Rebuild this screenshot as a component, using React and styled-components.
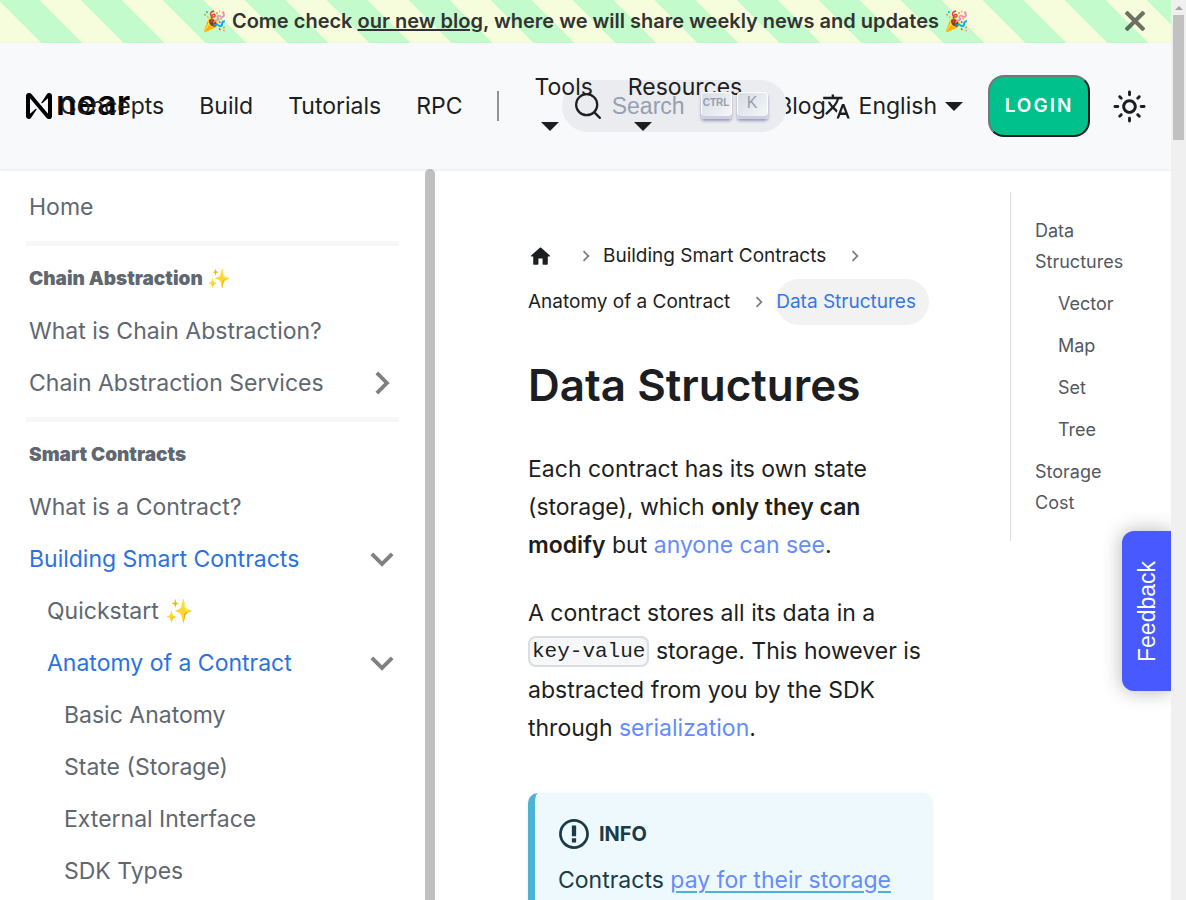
import React from "react";
import styled, { createGlobalStyle, css } from "styled-components";

const GlobalStyle = createGlobalStyle`
  *, *::before, *::after { box-sizing: border-box; }
  body {
    margin: 0;
    background: #fff;
    color: #1c1e21;
    font-family: Inter, "Liberation Sans", sans-serif;
    font-size: 23px;
    line-height: 38px;
    text-rendering: optimizeLegibility;
  }
  a { color: inherit; text-decoration: none; }
  ul, ol { list-style: none; margin: 0; padding: 0; }
  button { font: inherit; color: inherit; cursor: pointer; }
`;

const Shell = styled.div`
  display: grid;
  grid-template-columns: minmax(0, 1fr) 15px;
  height: 100vh;
  overflow: hidden;
`;

const Viewport = styled.div`
  position: relative;
  display: flex;
  flex-direction: column;
  min-width: 0;
  overflow: hidden;
`;

const PageScrollbar = styled.div`
  display: flex;
  flex-direction: column;
  align-items: center;
  gap: 5px;
  padding-top: 6px;
  background: #f0f0f0;
`;

const ScrollArrow = styled.span`
  border: 4px solid transparent;
  border-top: 0;
  border-bottom-color: #a3a3a3;
`;

const ScrollThumb = styled.span`
  width: 11px;
  height: 125px;
  background: #c1c1c1;
`;

const Announcement = styled.div`
  display: flex;
  align-items: center;
  height: 43px;
  flex: none;
  padding: 0 16px 2px;
  color: #333;
  font-size: 20px;
  font-weight: 600;
  line-height: 32px;
  background: repeating-linear-gradient(45deg, #f6fddc 0 29px, #c3fbcd 29px 58px);
`;

const AnnouncementText = styled.div`
  flex: 1;
  padding-left: 40px;
  text-align: center;
  a { text-decoration: underline; }
`;

const CloseButton = styled.button`
  display: flex;
  justify-content: center;
  width: 40px;
  padding: 0;
  border: 0;
  background: none;
  color: #000;
  opacity: 0.55;
`;

const Navbar = styled.nav`
  position: relative;
  z-index: 1;
  display: flex;
  align-items: center;
  height: 126px;
  flex: none;
  padding: 0 24px 0 26px;
  background: #f8f9fb;
  box-shadow: 0 1px 3px rgba(0, 0, 0, 0.1);
`;

const NavStart = styled.div`
  display: flex;
  align-items: center;
  flex: 1;
  min-width: 0;
`;

const NavEnd = styled.div`
  display: flex;
  align-items: center;
  flex: none;
`;

const Brand = styled.a`
  display: flex;
  align-items: center;
  gap: 4px;
  width: 0;
  margin-right: 16px;
  color: #000;
  svg { flex: none; }
`;

const BrandName = styled.span`
  padding-bottom: 6px;
  font-size: 34px;
  font-weight: 600;
`;

const NavLink = styled.a`
  flex: none;
  padding: 0 17px 0 18px;
`;

const Divider = styled.span`
  flex: none;
  width: 2px;
  height: 30px;
  margin: 0 18px 0 17px;
  background: #919296;
`;

const Caret = styled.span`
  flex: none;
  border: 9px solid transparent;
  border-top: 9px solid currentColor;
  border-bottom: 0;
`;

const Dropdown = styled.a`
  position: relative;
  display: flex;
  flex-direction: column;
  gap: 16px;
  flex: none;
  padding: 0 17px 14px 18px;
  ${Caret} { align-self: flex-start; margin-left: 6px; }
`;

const SearchButton = styled.button`
  display: flex;
  align-items: center;
  height: 52px;
  padding: 0 19px 0 12px;
  border: 0;
  border-radius: 26px;
  background: #ebecf0;
  font-family: "Liberation Sans", sans-serif;
  font-size: 23px;
`;

const SearchLabel = styled.span`
  padding: 0 16px 0 10px;
  color: #969faf;
`;

const Keys = styled.span`
  position: relative;
  display: flex;
  gap: 5px;
  padding-bottom: 2px;
`;

const Key = styled.kbd`
  display: flex;
  justify-content: center;
  width: 31px;
  height: 27px;
  padding-bottom: 4px;
  border-radius: 4px;
  background: linear-gradient(-225deg, #d5dbe4, #f8f8f8);
  box-shadow: inset 0 -3px 0 0 #cdcde6, inset 0 0 1px 1px #fff, 0 2px 3px 0 rgba(30, 35, 90, 0.4);
  color: #969faf;
  font-family: "Liberation Sans", sans-serif;
  font-size: ${(p) => (p.$small ? 10 : 16)}px;
  font-weight: ${(p) => (p.$small ? 700 : 400)};
  line-height: 22px;
`;

const Language = styled.a`
  display: flex;
  align-items: center;
  gap: 8px;
  padding: 0 25px 0 35px;
`;

const LoginButton = styled.button`
  width: 102px;
  height: 62px;
  padding: 0;
  border: 2px solid;
  border-color: #767676 #1c1e21 #1c1e21 #767676;
  border-radius: 16px;
  background: #00c08b;
  color: #fff;
  font-size: 19px;
  font-weight: 600;
  letter-spacing: 2px;
`;

const ThemeButton = styled.button`
  display: flex;
  margin-left: 22px;
  padding: 0;
  border: 0;
  background: none;
`;

const Body = styled.div`
  display: grid;
  grid-template-columns: 435px minmax(0, 1fr);
  flex: 1;
  min-height: 0;
`;

const Sidebar = styled.aside`
  display: grid;
  grid-template-columns: minmax(0, 1fr) 10px;
  min-height: 0;
  overflow: hidden;
`;

const SidebarThumb = styled.span`
  border-radius: 5px 5px 0 0;
  background: #c0c0c0;
`;

const Menu = styled.ul`
  padding: 12px 26px 0;
`;

const MenuDivider = styled.li`
  height: 5px;
  margin: 8px 0 7px;
  background: #f7f7f7;
`;

const indents = [3, 21, 38];

const MenuRow = styled.li`
  display: flex;
  align-items: center;
  justify-content: space-between;
  height: 52px;
  padding-left: ${(p) => indents[p.$level]}px;
  color: ${(p) => (p.$active ? "#2b72e0" : "#606770")};
  white-space: nowrap;
  ${(p) =>
    p.$heading &&
    css`
      font-size: 19px;
      font-weight: 900;
    `}
`;

const Toggle = styled.button`
  display: flex;
  margin-right: -6px;
  padding: 0;
  border: 0;
  background: none;
  color: #808080;
  svg { transform: rotate(${(p) => (p.$open ? 180 : 90)}deg); }
`;

const Main = styled.main`
  display: grid;
  grid-template-columns: minmax(0, 1fr) 138px;
  align-items: start;
  gap: 78px;
  padding: 23px 23px 0 93px;
`;

const Article = styled.article`
  padding-top: 41px;
`;

const Breadcrumbs = styled.ol`
  display: flex;
  flex-wrap: wrap;
  font-size: 19px;
  line-height: 46px;
`;

const Crumb = styled.li`
  display: flex;
  align-items: center;
  svg.sep { margin: 0 6px 0 18px; color: #808080; transform: rotate(90deg); }
`;

const CurrentCrumb = styled.span`
  padding-right: 13px;
  border-radius: 23px;
  background: #f2f2f2;
  color: #3578e5;
`;

const HomeLink = styled.a`
  display: flex;
  padding-right: 4px;
`;

const Title = styled.h1`
  margin: 32px 0 37px;
  font-size: 44px;
  font-weight: 600;
  line-height: 56px;
`;

const Paragraph = styled.p`
  margin: 0 0 30px;
  strong { font-weight: 600; }
`;

const TextLink = styled.a`
  color: #648cff;
`;

const Code = styled.code`
  padding: 2px;
  border: 2px solid #dadde1;
  border-radius: 8px;
  background: #f6f7f8;
  font-family: "Liberation Mono", monospace;
  font-size: 21px;
  vertical-align: 2px;
`;

const Admonition = styled.section`
  margin-top: 46px;
  padding: 22px 22px 22px 23px;
  border-left: 7px solid #4cb3d4;
  border-radius: 10px;
  background: #eef9fd;
  box-shadow: 0 1px 3px rgba(0, 0, 0, 0.1);
  color: #193c47;
  ${TextLink} {
    text-decoration: underline 2px #4cb3d4;
    text-underline-offset: 3px;
  }
`;

const AdmonitionTitle = styled.h2`
  display: flex;
  align-items: center;
  gap: 9px;
  margin: 0 0 8px;
  font-size: 20px;
  font-weight: 700;
  line-height: 38px;
`;

const Toc = styled.ul`
  padding: 23px 8px 12px 24px;
  border-left: 1px solid #dadde1;
  color: #525860;
  font-size: 18px;
  line-height: 31px;
`;

const TocItem = styled.li`
  margin-bottom: 11px;
  padding-left: ${(p) => (p.$nested ? 23 : 0)}px;
`;

const Feedback = styled.button`
  position: absolute;
  right: 0;
  top: 531px;
  z-index: 2;
  width: 49px;
  height: 160px;
  padding: 0;
  border: 0;
  border-radius: 0 12px 12px 0;
  background: #485aff;
  box-shadow: 0 0 20px rgba(0, 0, 0, 0.3);
  color: #fff;
  font-family: "Liberation Sans", sans-serif;
  writing-mode: vertical-rl;
  transform: rotate(180deg);
`;

const Chevron = ({ size, className }) => (
  <svg className={className} width={size} height={size} viewBox="0 0 24 24" fill="currentColor" aria-hidden="true">
    <path d="M7.41 15.41L12 10.83l4.59 4.58L18 14l-6-6-6 6z" />
  </svg>
);

const Filled = ({ size, box = "0 0 24 24", d }) => (
  <svg width={size} height={size} viewBox={box} fill="currentColor" aria-hidden="true">
    <path d={d} />
  </svg>
);

const paths = {
  near: "M72.2 4.6L53.4 32.5c-1.3 1.9 1.2 4.2 3 2.6L74.9 19c.5-.4 1.2-.1 1.2.6v50.3c0 .7-.9 1-1.3.5l-56-67C17 1.2 14.4 0 11.5 0h-2C4.3 0 0 4.3 0 9.6v70.8C0 85.7 4.3 90 9.6 90c3.3 0 6.4-1.7 8.2-4.6l18.8-27.9c1.3-1.9-1.2-4.2-3-2.6L15.1 70.9c-.5.4-1.2.1-1.2-.6V20.1c0-.7.9-1 1.3-.5l56 67c1.8 2.2 4.5 3.4 7.3 3.4h2c5.3 0 9.6-4.3 9.6-9.6V9.6C90 4.3 85.7 0 80.4 0c-3.3 0-6.4 1.7-8.2 4.6z",
  translate:
    "M12.87 15.07l-2.54-2.51.03-.03c1.74-1.94 2.98-4.17 3.71-6.53H17V4h-7V2H8v2H1v1.99h11.17C11.5 7.92 10.44 9.75 9 11.35 8.07 10.32 7.3 9.19 6.69 8h-2c.73 1.63 1.73 3.17 2.98 4.56l-5.09 5.02L4 19l5-5 3.11 3.11.76-2.04zM18.5 10h-2L12 22h2l1.12-3h4.75L21 22h2l-4.5-12zm-2.62 7l1.62-4.33L19.12 17h-3.24z",
  sun: "M12,9c1.65,0,3,1.35,3,3s-1.35,3-3,3s-3-1.35-3-3S10.35,9,12,9 M12,7c-2.76,0-5,2.24-5,5s2.24,5,5,5s5-2.24,5-5 S14.76,7,12,7L12,7z M2,13l2,0c0.55,0,1-0.45,1-1s-0.45-1-1-1l-2,0c-0.55,0-1,0.45-1,1S1.45,13,2,13z M20,13l2,0c0.55,0,1-0.45,1-1 s-0.45-1-1-1l-2,0c-0.55,0-1,0.45-1,1S19.45,13,20,13z M11,2v2c0,0.55,0.45,1,1,1s1-0.45,1-1V2c0-0.55-0.45-1-1-1S11,1.45,11,2z M11,20v2c0,0.55,0.45,1,1,1s1-0.45,1-1v-2c0-0.55-0.45-1-1-1C11.45,19,11,19.45,11,20z M5.99,4.58c-0.39-0.39-1.03-0.39-1.41,0 c-0.39,0.39-0.39,1.03,0,1.41l1.06,1.06c0.39,0.39,1.03,0.39,1.41,0s0.39-1.03,0-1.41L5.99,4.58z M18.36,16.95 c-0.39-0.39-1.03-0.39-1.41,0c-0.39,0.39-0.39,1.03,0,1.41l1.06,1.06c0.39,0.39,1.03,0.39,1.41,0c0.39-0.39,0.39-1.03,0-1.41 L18.36,16.95z M19.42,5.99c0.39-0.39,0.39-1.03,0-1.41c-0.39-0.39-1.03-0.39-1.41,0l-1.06,1.06c-0.39,0.39-0.39,1.03,0,1.41 s1.03,0.39,1.41,0L19.42,5.99z M7.05,18.36c0.39-0.39,0.39-1.03,0-1.41c-0.39-0.39-1.03-0.39-1.41,0l-1.06,1.06 c-0.39,0.39-0.39,1.03,0,1.41s1.03,0.39,1.41,0L7.05,18.36z",
  home: "M10 19v-5h4v5c0 .55.45 1 1 1h3c.55 0 1-.45 1-1v-7h1.7c.46 0 .68-.57.33-.87L12.67 3.6c-.38-.34-.96-.34-1.34 0l-8.36 7.53c-.34.3-.13.87.33.87H5v7c0 .55.45 1 1 1h3c.55 0 1-.45 1-1z",
  info: "M7 2.3c3.14 0 5.7 2.56 5.7 5.7s-2.56 5.7-5.7 5.7A5.71 5.71 0 0 1 1.3 8c0-3.14 2.56-5.7 5.7-5.7zM7 1C3.14 1 0 4.14 0 8s3.14 7 7 7 7-3.14 7-7-3.14-7-7-7zm1 3H6v5h2V4zm0 6H6v2h2v-2z",
};

const menu = [
  { label: "Home" },
  { divider: true },
  { label: "Chain Abstraction ✨", heading: true },
  { label: "What is Chain Abstraction?" },
  { label: "Chain Abstraction Services", toggle: "closed" },
  { divider: true },
  { label: "Smart Contracts", heading: true },
  { label: "What is a Contract?" },
  { label: "Building Smart Contracts", active: true, toggle: "open" },
  { label: "Quickstart ✨", level: 1 },
  { label: "Anatomy of a Contract", level: 1, active: true, toggle: "open" },
  { label: "Basic Anatomy", level: 2 },
  { label: "State (Storage)", level: 2 },
  { label: "External Interface", level: 2 },
  { label: "SDK Types", level: 2 },
];

const toc = [
  { label: "Data Structures" },
  { label: "Vector", nested: true },
  { label: "Map", nested: true },
  { label: "Set", nested: true },
  { label: "Tree", nested: true },
  { label: "Storage Cost" },
];

function Header() {
  return (
    <Navbar aria-label="Main">
      <NavStart>
        <Brand href="#">
          <Filled size={26} box="0 0 90 90" d={paths.near} />
          <BrandName>near</BrandName>
        </Brand>
        <NavLink href="#">Concepts</NavLink>
        <NavLink href="#">Build</NavLink>
        <NavLink href="#">Tutorials</NavLink>
        <NavLink href="#">RPC</NavLink>
        <Divider />
        <Dropdown href="#">
          Tools
          <Caret />
        </Dropdown>
        <Dropdown href="#">
          Resources
          <Caret />
        </Dropdown>
        <NavLink href="#">Blog</NavLink>
      </NavStart>
      <NavEnd>
        <SearchButton aria-label="Search">
          <svg width="28" height="28" viewBox="0 0 20 20" fill="none" aria-hidden="true">
            <path
              d="M14.386 14.386l4.0877 4.0877-4.0877-4.0877c-2.9418 2.9419-7.7115 2.9419-10.6533 0-2.9419-2.9418-2.9419-7.7115 0-10.6533 2.9418-2.9419 7.7115-2.9419 10.6533 0 2.9419 2.9418 2.9419 7.7115 0 10.6533z"
              stroke="currentColor"
              strokeWidth="1.6"
              strokeLinecap="round"
              strokeLinejoin="round"
            />
          </svg>
          <SearchLabel>Search</SearchLabel>
          <Keys>
            <Key $small>CTRL</Key>
            <Key>K</Key>
          </Keys>
        </SearchButton>
        <Language href="#">
          <Filled size={29} d={paths.translate} />
          English
          <Caret />
        </Language>
        <LoginButton>LOGIN</LoginButton>
        <ThemeButton aria-label="Switch theme">
          <Filled size={35} d={paths.sun} />
        </ThemeButton>
      </NavEnd>
    </Navbar>
  );
}

function DocsMenu() {
  return (
    <Sidebar>
      <Menu>
        {menu.map((item, i) =>
          item.divider ? (
            <MenuDivider key={i} />
          ) : (
            <MenuRow key={i} $level={item.level || 0} $active={item.active} $heading={item.heading}>
              {item.heading ? <span>{item.label}</span> : <a href="#">{item.label}</a>}
              {item.toggle && (
                <Toggle $open={item.toggle === "open"} aria-label={`Toggle ${item.label}`}>
                  <Chevron size={46} />
                </Toggle>
              )}
            </MenuRow>
          )
        )}
      </Menu>
      <SidebarThumb />
    </Sidebar>
  );
}

export default function App() {
  return (
    <>
      <GlobalStyle />
      <Shell>
        <Viewport>
          <Announcement>
            <AnnouncementText>
              🎉 Come check <a href="#">our new blog</a>, where we will share weekly news and updates 🎉
            </AnnouncementText>
            <CloseButton aria-label="Close">
              <svg width="20" height="20" viewBox="0 0 15 15" stroke="currentColor" strokeWidth="3.1" aria-hidden="true">
                <path d="M.75.75l13.5 13.5M14.25.75L.75 14.25" />
              </svg>
            </CloseButton>
          </Announcement>
          <Header />
          <Body>
            <DocsMenu />
            <Main>
              <Article>
                <Breadcrumbs>
                  <Crumb>
                    <HomeLink href="#" aria-label="Home page">
                      <Filled size={25} d={paths.home} />
                    </HomeLink>
                    <Chevron className="sep" size={22} />
                  </Crumb>
                  <Crumb>
                    <a href="#">Building Smart Contracts</a>
                    <Chevron className="sep" size={22} />
                  </Crumb>
                  <Crumb>
                    <a href="#">Anatomy of a Contract</a>
                    <Chevron className="sep" size={22} />
                  </Crumb>
                  <Crumb>
                    <CurrentCrumb>Data Structures</CurrentCrumb>
                  </Crumb>
                </Breadcrumbs>
                <Title>Data Structures</Title>
                <Paragraph>
                  Each contract has its own state (storage), which <strong>only they can modify</strong> but{" "}
                  <TextLink href="#">anyone can see</TextLink>.
                </Paragraph>
                <Paragraph>
                  A contract stores all its data in a <Code>key-value</Code> storage. This however is abstracted from
                  you by the SDK through <TextLink href="#">serialization</TextLink>.
                </Paragraph>
                <Admonition>
                  <AdmonitionTitle>
                    <Filled size={32} box="-0.5 0.5 15 15" d={paths.info} />
                    INFO
                  </AdmonitionTitle>
                  Contracts <TextLink href="#">pay for their storage</TextLink>
                </Admonition>
              </Article>
              <Toc>
                {toc.map((item) => (
                  <TocItem key={item.label} $nested={item.nested}>
                    <a href="#">{item.label}</a>
                  </TocItem>
                ))}
              </Toc>
            </Main>
          </Body>
          <Feedback>Feedback</Feedback>
        </Viewport>
        <PageScrollbar>
          <ScrollArrow />
          <ScrollThumb />
        </PageScrollbar>
      </Shell>
    </>
  );
}
